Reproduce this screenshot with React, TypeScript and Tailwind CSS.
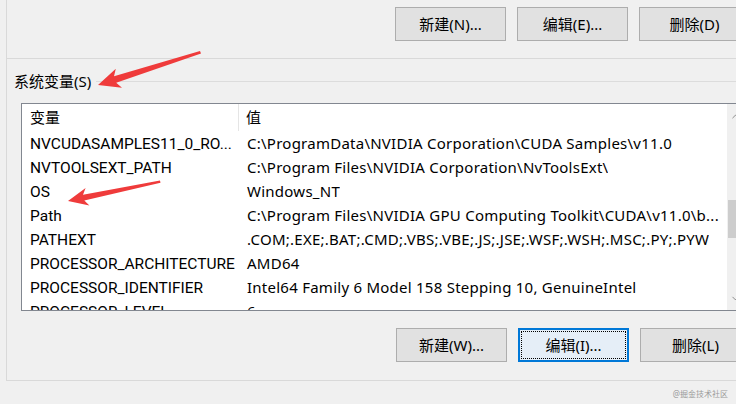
import { ChevronDown, ChevronUp } from "lucide-react";

const rows = [
  ["NVCUDASAMPLES11_0_RO...", "C:\\ProgramData\\NVIDIA Corporation\\CUDA Samples\\v11.0"],
  ["NVTOOLSEXT_PATH", "C:\\Program Files\\NVIDIA Corporation\\NvToolsExt\\"],
  ["OS", "Windows_NT"],
  ["Path", "C:\\Program Files\\NVIDIA GPU Computing Toolkit\\CUDA\\v11.0\\b..."],
  ["PATHEXT", ".COM;.EXE;.BAT;.CMD;.VBS;.VBE;.JS;.JSE;.WSF;.WSH;.MSC;.PY;.PYW"],
  ["PROCESSOR_ARCHITECTURE", "AMD64"],
  ["PROCESSOR_IDENTIFIER", "Intel64 Family 6 Model 158 Stepping 10, GenuineIntel"],
  ["PROCESSOR_LEVEL", "6"],
];

const Btn = ({ label, focused }: { label: string; focused?: boolean }) => (
  <button
    className={
      focused
        ? "w-[111px] h-[34px] shrink-0 bg-[#e5eef7] border-2 border-[#0078d7] p-[1px] text-[15px] text-black"
        : "w-[111px] h-[34px] shrink-0 bg-[#e1e1e1] border border-[#adadad] text-[15px] text-black"
    }
  >
    {focused ? (
      <span className="flex h-full w-full items-center justify-center border border-dotted border-black">
        {label}
      </span>
    ) : (
      label
    )}
  </button>
);

export default function App() {
  return (
    <div className="relative w-[736px] h-[404px] overflow-hidden bg-[#f0f0f0] font-['Noto_Sans','Noto_Sans_CJK_SC',sans-serif] text-black">
      {/* user variables group (cut off at top) */}
      <div className="ml-[6px] h-[59px] border-l border-b border-[#d9d9d9] pt-[7px] pl-[388px] flex gap-[11px]">
        <Btn label="新建(N)..." />
        <Btn label="编辑(E)..." />
        <Btn label="删除(D)" />
      </div>

      {/* system variables group */}
      <div className="ml-[6px] h-[322px] border-l border-b border-[#d9d9d9] flex flex-col">
        <div className="mt-[13px] h-[18px] flex items-center">
          <span className="pl-[7px] pr-[5px] text-[15px] leading-none">系统变量(S)</span>
          <div className="flex-1 h-px bg-[#dcdcdc]" />
        </div>

        <div className="mt-[13px] ml-[14px] w-[725px] h-[208px] border border-[#828790] bg-white flex overflow-hidden">
          <div className="w-[705px] shrink-0 text-[15px]">
            <div className="flex h-[27px] items-center">
              <div className="w-[217px] h-full pl-[8px] flex items-center border-r border-[#e5e5e5]">变量</div>
              <div className="pl-[7px]">值</div>
            </div>
            {rows.map(([k, v], i) => (
              <div key={i} className="flex h-[24px] items-baseline whitespace-nowrap leading-[24px]">
                <div className="w-[217px] pl-[8px] overflow-hidden text-[15.5px] font-['Roboto',sans-serif]">{k}</div>
                <div className="pl-[8px] overflow-hidden tracking-[0.25px]">{v}</div>
              </div>
            ))}
          </div>
          <div className="w-[17px] shrink-0 bg-[#f0f0f0] flex flex-col items-center text-[#606060]">
            <div className="h-[17px] w-full flex items-center justify-center mt-[4px]">
              <ChevronUp size={11} strokeWidth={1.5} />
            </div>
            <div className="h-[75px]" />
            <div className="h-[38px] w-[15px] bg-[#cdcdcd]" />
            <div className="flex-1" />
            <div className="h-[17px] w-full flex items-center justify-center mb-[3px]">
              <ChevronDown size={11} strokeWidth={1.5} />
            </div>
          </div>
        </div>

        <div className="mt-[17px] pl-[389px] flex gap-[11px]">
          <Btn label="新建(W)..." />
          <Btn label="编辑(I)..." focused />
          <Btn label="删除(L)" />
        </div>
      </div>

      <div className="flex justify-end pr-[8px] pt-[7px] text-[8px] text-[#9a9a9a]">@掘金技术社区</div>

      {/* red annotation arrows */}
      <svg className="absolute left-0 top-0" width="736" height="404" viewBox="0 0 736 404">
        <polygon
          points="98,85 115.8,68.7 114,76.2 200,51 201,53.5 116.2,82.8 122,87.7"
          fill="#ef3b3b"
        />
        <polygon
          points="68,201 85.6,188 83,194.7 160,180.5 160.5,182.8 84.3,200.5 89.4,205.5"
          fill="#ef3b3b"
        />
      </svg>
    </div>
  );
}
